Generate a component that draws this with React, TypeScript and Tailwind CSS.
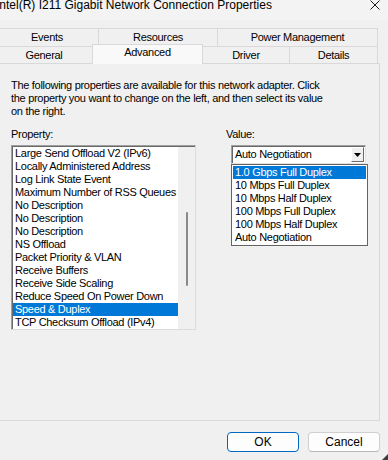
import React from "react";

const items = [
  "Large Send Offload V2 (IPv6)",
  "Locally Administered Address",
  "Log Link State Event",
  "Maximum Number of RSS Queues",
  "No Description",
  "No Description",
  "No Description",
  "NS Offload",
  "Packet Priority & VLAN",
  "Receive Buffers",
  "Receive Side Scaling",
  "Reduce Speed On Power Down",
  "Speed & Duplex",
  "TCP Checksum Offload (IPv4)",
];

const values = [
  "1.0 Gbps Full Duplex",
  "10 Mbps Full Duplex",
  "10 Mbps Half Duplex",
  "100 Mbps Full Duplex",
  "100 Mbps Half Duplex",
  "Auto Negotiation",
];

export default function App() {
  return (
    <div className="w-[388px] h-[460px] bg-[#f0f0f0] overflow-hidden relative flex flex-col font-['Liberation_Sans',Arial,sans-serif] text-[11px] tracking-[-0.3px] text-black">
      {/* Title bar */}
      <div className="h-[20px] shrink-0 flex items-start justify-between bg-[#f3f3f3]">
        <span className="ml-[-4px] mt-[-3px] text-[12px] leading-[16px] tracking-normal whitespace-nowrap">
          Intel(R) I211 Gigabit Network Connection Properties
        </span>
        <svg className="mr-[8px] mt-[0px]" width="10" height="10" viewBox="0 0 10 10">
          <path d="M0.5 0.5 L9.5 9.5 M9.5 0.5 L0.5 9.5" stroke="#1a1a1a" strokeWidth="1" />
        </svg>
      </div>

      <div className="h-[8px] shrink-0" />

      {/* Tabs row 1 */}
      <div className="flex h-[18px] shrink-0 ml-[-5px] leading-[13px]">
        <div className="w-[103px] border-t border-l border-[#d9d9d9] flex items-center justify-center">Events</div>
        <div className="w-[119px] border-t border-l border-[#d9d9d9] flex items-center justify-center">Resources</div>
        <div className="w-[161px] border-t border-l border-r border-[#d9d9d9] flex items-center justify-center">Power Management</div>
      </div>

      {/* Tabs row 2 */}
      <div className="flex h-[17px] shrink-0 ml-[-5px] leading-[13px]">
        <div className="w-[97px] border-t border-l border-[#d9d9d9] flex justify-center pt-[2px]">General</div>
        <div className="relative z-10 w-[111px] h-[20px] mt-[-2px] bg-[#f9f9f9] border-t border-l border-r border-[#d9d9d9] flex justify-center pt-[1px]">Advanced</div>
        <div className="w-[86px] border-t border-[#d9d9d9] flex justify-center pt-[2px]">Driver</div>
        <div className="w-[89px] border-t border-l border-r border-[#d9d9d9] flex justify-center pt-[2px]">Details</div>
      </div>

      {/* Panel */}
      <div className="h-[358px] w-[385px] shrink-0 ml-[-5px] border border-[#d9d9d9] bg-[#f0f0f0] pl-[15px] pt-[15px] leading-[13px]">
        <p className="whitespace-nowrap tracking-[-0.3px]">
          The following properties are available for this network adapter. Click
          <br />
          the property you want to change on the left, and then select its value
          <br />
          on the right.
        </p>

        <div className="flex mt-[10px]">
          {/* Property column */}
          <div className="flex flex-col w-[185px]">
            <div>Property:</div>
            <div className="mt-[4px] h-[185px] border border-t-[#a0a0a0] border-l-[#a0a0a0] border-b-[#dcdcdc] border-r-[#dcdcdc] shadow-[inset_1px_1px_0_#696969] bg-white flex pt-[1px] pl-[1px]">
              <div className="w-[165px] flex flex-col">
                {items.map((it, i) => (
                  <div
                    key={i}
                    className={
                      i === 12
                        ? "h-[13px] leading-[13px] pl-[2px] whitespace-nowrap bg-[#0078d7] text-white"
                        : "h-[13px] leading-[13px] pl-[2px] whitespace-nowrap"
                    }
                  >
                    {it}
                  </div>
                ))}
              </div>
              <div className="flex-1 bg-[#f0f0f0] flex justify-center pt-[65px] pl-[1px]">
                <div className="w-[2px] h-[74px] rounded-full bg-[#8a8a8a]" />
              </div>
            </div>
          </div>

          {/* Value column */}
          <div className="flex flex-col ml-[30px]">
            <div>Value:</div>
            <div className="relative mt-[4px] ml-[5px] w-[135px] h-[19px] border border-t-[#a0a0a0] border-l-[#a0a0a0] border-b-[#e3e3e3] border-r-[#e3e3e3] shadow-[inset_1px_1px_0_#696969] bg-white flex items-center">
              <span className="pl-[3px] flex-1 whitespace-nowrap">Auto Negotiation</span>
              <div className="w-[13px] h-[15px] mr-[1px] bg-[#f0f0f0] border border-t-[#ffffff] border-l-[#ffffff] border-b-[#696969] border-r-[#696969] flex items-center justify-center">
                <svg width="7" height="4" viewBox="0 0 7 4">
                  <path d="M0 0 H7 L3.5 4 Z" fill="#000" />
                </svg>
              </div>
              <div className="absolute left-[-1px] top-[18px] w-[137px] h-[82px] bg-white border border-[#646464] p-[1px] z-20">
                {values.map((v, i) => (
                  <div
                    key={i}
                    className={
                      i === 0
                        ? "h-[13px] leading-[13px] pl-[2px] whitespace-nowrap bg-[#0078d7] text-white"
                        : "h-[13px] leading-[13px] pl-[2px] whitespace-nowrap"
                    }
                  >
                    {v}
                  </div>
                ))}
              </div>
            </div>
          </div>
        </div>
      </div>

      {/* Buttons */}
      <div className="flex justify-end gap-[9px] pr-[8px] mt-[11px] text-[12px] tracking-normal">
        <button className="w-[72px] h-[20px] rounded-[4px] border border-[#0067c0] bg-[#fdfdfd] leading-[16px]">OK</button>
        <button className="w-[72px] h-[20px] rounded-[4px] border border-[#d0d0d0] border-b-[#b8b8b8] bg-[#fdfdfd] leading-[16px]">Cancel</button>
      </div>

      {/* Resize grip */}
      <svg className="absolute right-0 bottom-0" width="6" height="6" viewBox="0 0 6 6">
        <path d="M6 0 V6 H0 Z" fill="#3c3c3c" />
      </svg>
    </div>
  );
}
